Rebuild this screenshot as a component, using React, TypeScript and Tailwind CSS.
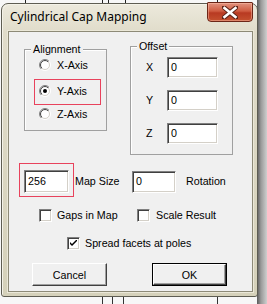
import React from "react";

const sunken =
  "border border-t-[#808080] border-l-[#808080] border-b-white border-r-white shadow-[inset_1px_1px_0_#404040,inset_-1px_-1px_0_#d4d0c8] bg-white";

function Radio({ checked = false }: { checked?: boolean }) {
  return (
    <svg width="12" height="12" viewBox="0 0 12 12" className="shrink-0">
      <defs>
        <linearGradient id="ro" x1="0" y1="0" x2="1" y2="1">
          <stop offset="0.5" stopColor="#808080" />
          <stop offset="0.5" stopColor="#ffffff" />
        </linearGradient>
        <linearGradient id="ri" x1="0" y1="0" x2="1" y2="1">
          <stop offset="0.5" stopColor="#404040" />
          <stop offset="0.5" stopColor="#d4d0c8" />
        </linearGradient>
      </defs>
      <circle cx="6" cy="6" r="5.5" fill="none" stroke="url(#ro)" strokeWidth="1" />
      <circle cx="6" cy="6" r="4.5" fill="#fff" stroke="url(#ri)" strokeWidth="1" />
      {checked && <circle cx="6" cy="6" r="2" fill="#000" />}
    </svg>
  );
}

function Check({ checked = false }: { checked?: boolean }) {
  return (
    <div className={`w-[13px] h-[13px] shrink-0 ${sunken} flex items-center justify-center`}>
      {checked && (
        <svg width="7" height="7" viewBox="0 0 7 7">
          <path d="M0 2 L2 4 L7 -1 L7 1 L2 6 L0 4 Z" fill="#000" />
        </svg>
      )}
    </div>
  );
}

function Field({ value, w, h }: { value: string; w: string; h: string }) {
  return (
    <div className={`${w} ${h} ${sunken} flex items-center pl-[3px] text-black`}>{value}</div>
  );
}

function Button({ label, def = false }: { label: string; def?: boolean }) {
  return (
    <div
      className={`w-[75px] h-[23px] flex items-center justify-center bg-[#f0f0f0] ${
        def ? "border border-[#000]" : ""
      }`}
    >
      <div className="w-full h-full flex items-center justify-center border border-t-white border-l-white border-b-[#404040] border-r-[#404040] shadow-[inset_-1px_-1px_0_#a0a0a0]">
        {label}
      </div>
    </div>
  );
}

export default function App() {
  const topLines = [25, 102, 108, 125, 217];
  const bottomLines = [102, 112, 123, 217];
  return (
    <div
      className="relative w-[267px] h-[304px] overflow-hidden bg-[#f7f7f7] text-[10.7px] text-black"
      style={{ fontFamily: '"Liberation Sans", Arial, sans-serif' }}
    >
      {topLines.map((x) => (
        <div key={"t" + x} className="absolute top-0 h-[4px] w-px bg-[#222]" style={{ left: x }} />
      ))}
      {bottomLines.map((x) => (
        <div key={"b" + x} className="absolute top-[297px] h-[7px] w-px bg-[#333]" style={{ left: x }} />
      ))}
      <div className="absolute right-0 top-0 h-full w-[10px] bg-[linear-gradient(to_right,#5a5a5a,#9a9a9a_40%,#cfcfcf)]" />

      <div className="relative pt-[3px] pl-[1px]">
        {/* window */}
        <div className="w-[257px] h-[294px] rounded-t-[7px] rounded-b-[3px] border border-[#5e5d52] bg-[linear-gradient(to_bottom,#ece9dc,#e0dcca_28px,#d5d1ba)] shadow-[inset_1px_1px_0_#f4f2e8] flex flex-col">
          {/* title bar */}
          <div className="h-[27px] flex items-start justify-between shrink-0">
            <div
              className="pl-[8px] pt-[6px] text-[12px] leading-[14px] text-black"
              style={{ fontFamily: '"Noto Sans", "Open Sans", sans-serif' }}
            >
              Cylindrical Cap Mapping
            </div>
            <div className="mr-[4px] -mt-[2px] w-[46px] h-[20px] rounded-b-[4px] rounded-t-[1px] border border-[#6d2617] bg-[linear-gradient(to_bottom,#e2937f,#cf5c41_45%,#b83a22_55%,#c4512f)] shadow-[inset_0_0_0_1px_rgba(255,200,180,0.45)] flex items-center justify-center">
              <svg width="16" height="13" viewBox="0 0 16 13">
                <path d="M2 1.5 L14 11.5 M14 1.5 L2 11.5" stroke="#5a2418" strokeWidth="4.6" strokeLinecap="round" />
                <path d="M2.5 2 L13.5 11 M13.5 2 L2.5 11" stroke="#ffffff" strokeWidth="2.6" strokeLinecap="square" />
              </svg>
            </div>
          </div>

          {/* client area */}
          <div className="ml-[6px] w-[245px] h-[261px] border border-[#8d8a77] bg-[#f0f0f0] shadow-[0_0_0_1px_#ebe8d8]">
            {/* Row 1: groups */}
            <div className="flex items-start pl-[15px]">
              <div className="relative mt-[17px] w-[83px] h-[82px] border border-[#a0a0a0] shadow-[inset_1px_1px_0_#fff]">
                <span className="absolute left-[6px] -top-[7px] px-[2px] bg-[#f0f0f0] leading-[12px]">Alignment</span>
                <div className="flex flex-col">
                  <div className="flex items-center gap-[6px] pl-[14px] mt-[9px] h-[12px]">
                    <Radio />
                    <span>X-Axis</span>
                  </div>
                  <div className="relative flex items-center gap-[6px] pl-[14px] mt-[14px] h-[12px]">
                    <div className="absolute left-[9px] -top-[6px] w-[67px] h-[26px] border-[1.5px] border-solid border-[#e8425c]" />
                    <Radio checked />
                    <span>Y-Axis</span>
                  </div>
                  <div className="flex items-center gap-[6px] pl-[14px] mt-[11px] h-[12px]">
                    <Radio />
                    <span>Z-Axis</span>
                  </div>
                </div>
              </div>

              <div className="relative ml-[23px] mt-[14px] w-[103px] h-[109px] border border-[#a0a0a0] shadow-[inset_1px_1px_0_#fff]">
                <span className="absolute left-[6px] -top-[7px] px-[2px] bg-[#f0f0f0] leading-[12px]">Offset</span>
                <div className="flex flex-col pt-[10px] gap-[12px]">
                  {["X", "Y", "Z"].map((l) => (
                    <div key={l} className="flex items-center">
                      <span className="w-[36px] pl-[15px]">{l}</span>
                      <Field value="0" w="w-[51px]" h="h-[21px]" />
                    </div>
                  ))}
                </div>
              </div>
            </div>

            {/* Row 2 */}
            <div className="flex items-center pl-[15px] mt-[15px]">
              <div className="relative">
                <div className="absolute -left-[5px] -top-[7px] w-[55px] h-[34px] border-[1.5px] border-solid border-[#e8425c]" />
                <Field value="256" w="w-[45px]" h="h-[23px]" />
              </div>
              <span className="ml-[6px] w-[57px]">Map Size</span>
              <Field value="0" w="w-[44px]" h="h-[22px]" />
              <span className="ml-[10px]">Rotation</span>
            </div>

            {/* Row 3 */}
            <div className="flex items-center pl-[30px] mt-[14px]">
              <div className="flex items-center gap-[5px] w-[98px]">
                <Check />
                <span>Gaps in Map</span>
              </div>
              <div className="flex items-center gap-[6px]">
                <Check />
                <span>Scale Result</span>
              </div>
            </div>

            {/* Row 4 */}
            <div className="flex items-center gap-[5px] pl-[58px] mt-[12px]">
              <Check checked />
              <span>Spread facets at poles</span>
            </div>

            {/* Row 5 */}
            <div className="flex items-center gap-[45px] pl-[23px] mt-[12px]">
              <Button label="Cancel" />
              <Button label="OK" def />
            </div>
          </div>
        </div>
      </div>
    </div>
  );
}
